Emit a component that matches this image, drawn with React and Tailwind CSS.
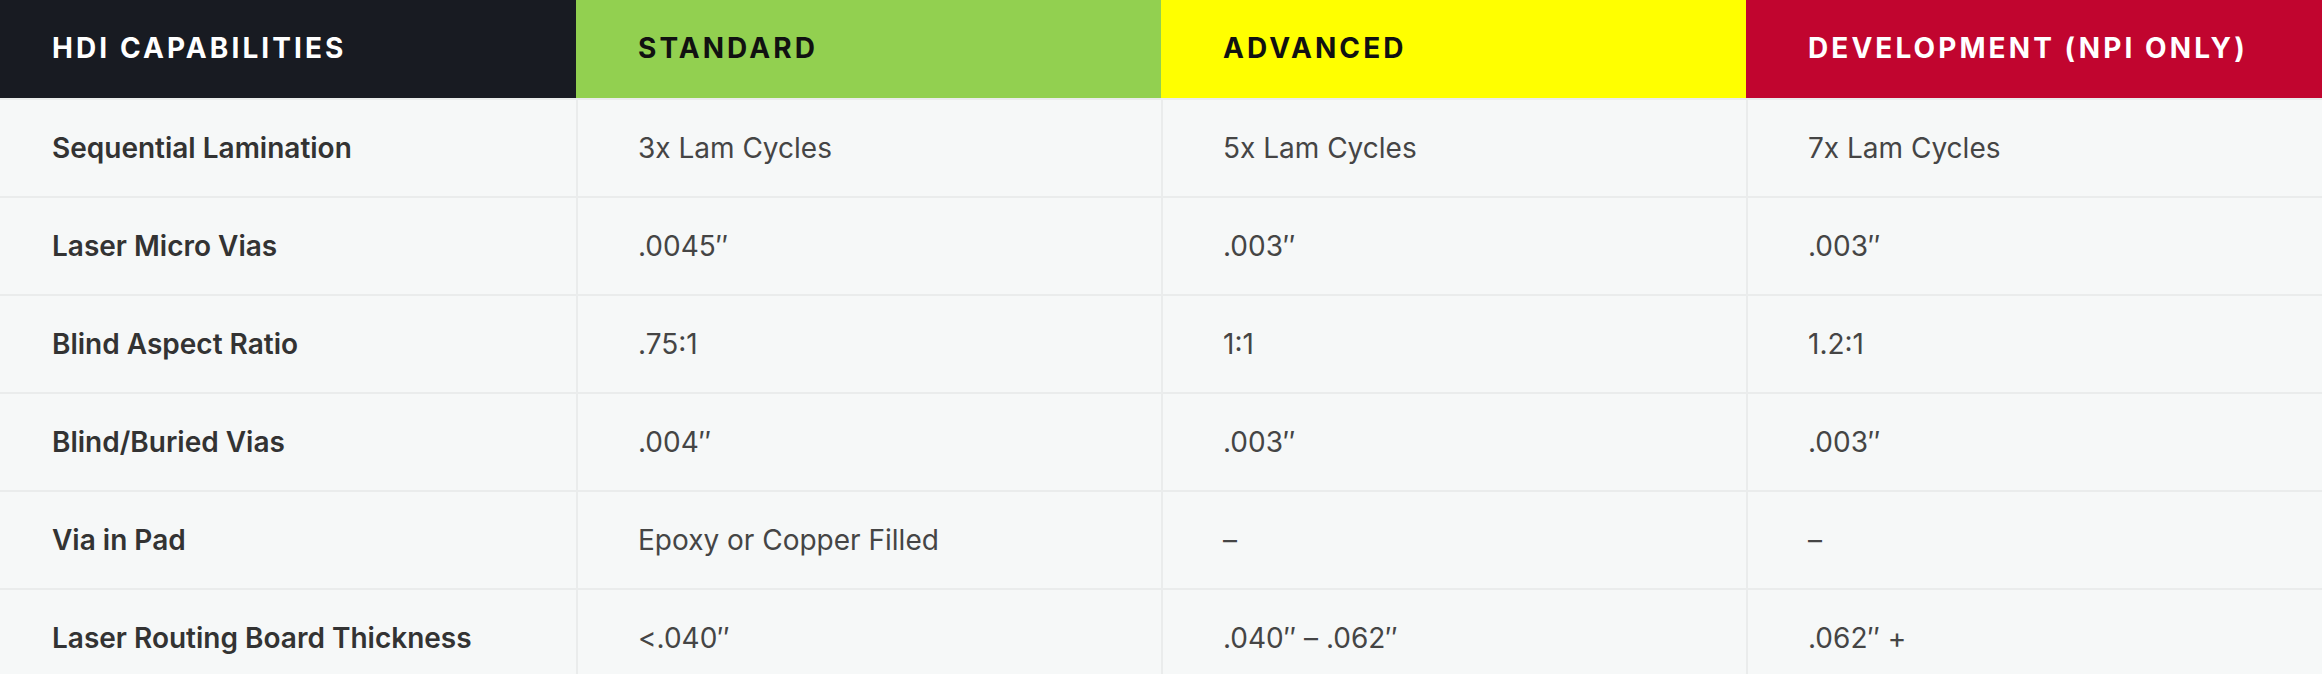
const headers = [
  { label: "HDI CAPABILITIES", cls: "bg-[#181b22] text-white pl-[52px]" },
  { label: "STANDARD", cls: "bg-[#92d050] text-[#111111] pl-[62px]" },
  { label: "ADVANCED", cls: "bg-[#ffff00] text-[#111111] pl-[62px]" },
  { label: "DEVELOPMENT (NPI ONLY)", cls: "bg-[#c1052f] text-white pl-[62px]" },
];

const rows = [
  ["Sequential Lamination", "3x Lam Cycles", "5x Lam Cycles", "7x Lam Cycles"],
  ["Laser Micro Vias", ".0045\u2033", ".003\u2033", ".003\u2033"],
  ["Blind Aspect Ratio", ".75:1", "1:1", "1.2:1"],
  ["Blind/Buried Vias", ".004\u2033", ".003\u2033", ".003\u2033"],
  ["Via in Pad", "Epoxy or Copper Filled", "\u2013", "\u2013"],
  ["Laser Routing Board Thickness", "<.040\u2033", ".040\u2033 \u2013 .062\u2033", ".062\u2033 +"],
];

export default function App() {
  return (
    <div className="w-full min-h-screen bg-[#f6f8f8] font-['Inter','Liberation_Sans',sans-serif]">
      {/* header row */}
      <div className="grid grid-cols-[576px_585px_585px_1fr] h-[98px]">
        {headers.map((h) => (
          <div
            key={h.label}
            className={`flex items-center pb-[2px] text-[28px] font-bold tracking-[0.11em] ${h.cls}`}
          >
            {h.label}
          </div>
        ))}
      </div>

      {/* body rows */}
      {rows.map((r, i) => (
        <div
          key={i}
          className="grid grid-cols-[576px_585px_585px_1fr] h-[98px] border-t-2 border-[#eaecec]"
        >
          {r.map((cell, j) => (
            <div
              key={j}
              className={
                j === 0
                  ? "flex items-center pl-[52px] text-[28px] font-semibold text-[#333333]"
                  : "flex items-center pl-[60px] text-[28px] text-[#454545] border-l-2 border-[#eaecec]"
              }
            >
              {cell}
            </div>
          ))}
        </div>
      ))}
    </div>
  );
}
